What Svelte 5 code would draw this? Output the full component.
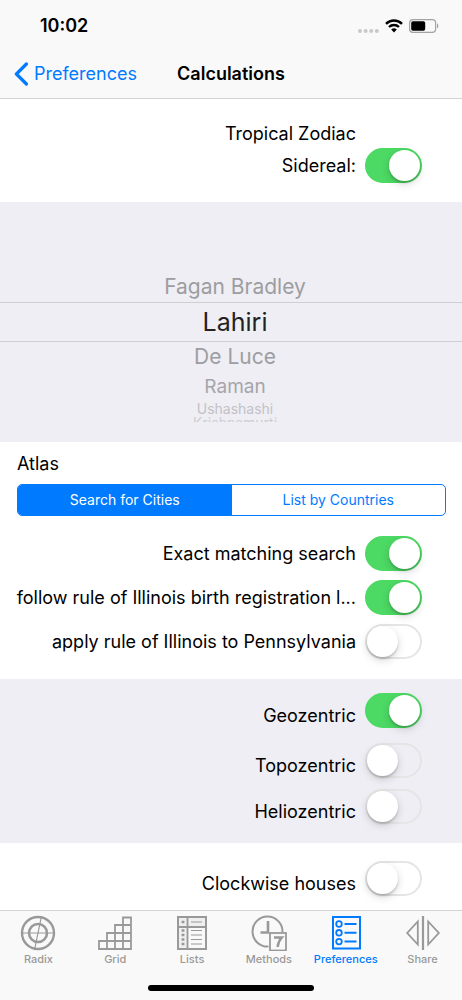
<script>
  let sidereal = $state(true);
  let exact = $state(true);
  let illinois = $state(true);
  let pennsylvania = $state(false);
  let geo = $state(true);
  let topo = $state(false);
  let helio = $state(false);
  let clockwise = $state(false);
  let atlas = $state('cities');
  let selected = $state('Lahiri');
  let tab = $state('Preferences');

  const systems = [
    { name: 'Fagan Bradley', kind: 'near' },
    { name: 'Lahiri', kind: 'middle' },
    { name: 'De Luce', kind: 'near' },
    { name: 'Raman', kind: 'far' },
    { name: 'Ushashashi', kind: 'farther' },
    { name: 'Krishnamurti', kind: 'edge' }
  ];
  const tabs = ['Radix', 'Grid', 'Lists', 'Methods', 'Preferences', 'Share'];
</script>

<div class="screen">
  <header>
    <div class="status">
      <span class="time">10:02</span>
      <svg class="signal" width="21" height="14" viewBox="0 0 21 14" fill="#c9c9cb" aria-hidden="true">
        <circle cx="2" cy="12" r="2" /><circle cx="7.6" cy="12" r="2" /><circle cx="13.2" cy="12" r="2" /><circle cx="18.8" cy="12" r="2" />
      </svg>
      <svg class="wifi" width="18" height="14" viewBox="0 0 18 14" aria-hidden="true">
        <path d="M1 4.8a11.6 11.6 0 0 1 16 0" fill="none" stroke="#000" stroke-width="2.5" />
        <path d="M4 8a7.2 7.2 0 0 1 10 0" fill="none" stroke="#000" stroke-width="2.4" />
        <path d="M6.2 10.5a4 4 0 0 1 5.6 0L9 13.4z" />
      </svg>
      <svg class="battery" width="30" height="14" viewBox="0 0 30 14" aria-hidden="true">
        <rect x="0.6" y="0.6" width="26" height="12.8" rx="3.4" fill="none" stroke="#a3a3a5" stroke-width="1.2" />
        <rect x="2.2" y="2.2" width="14" height="9.6" rx="1.8" />
        <path d="M28 4.6c1.8.6 1.8 4.2 0 4.8z" fill="#a3a3a5" />
      </svg>
    </div>
    <nav class="bar">
      <button class="back">
        <svg width="15" height="24" viewBox="0 0 15 24" fill="none" stroke="#007aff" stroke-width="3.2" stroke-linecap="round" stroke-linejoin="round" aria-hidden="true"><path d="M12.4 2 2.4 12l10 10" /></svg>
        Preferences
      </button>
      <h1>Calculations</h1>
    </nav>
  </header>

  <main>
    <section class="zodiac">
      <p>Tropical Zodiac</p>
      <div class="row">
        <label for="sidereal">Sidereal:</label>
        <input id="sidereal" type="checkbox" role="switch" bind:checked={sidereal} />
      </div>
    </section>

    <section class="wheel" role="listbox" aria-label="Ayanamsa">
      {#each systems as s}
        <button role="option" aria-selected={selected === s.name} class={s.kind} onclick={() => (selected = s.name)}>{s.name}</button>
      {/each}
    </section>

    <section class="atlas">
      <h2>Atlas</h2>
      <div class="segments">
        <button class:on={atlas === 'cities'} onclick={() => (atlas = 'cities')}>Search for Cities</button>
        <button class:on={atlas === 'countries'} onclick={() => (atlas = 'countries')}>List by Countries</button>
      </div>
      <div class="rows">
        <div class="row">
          <label for="exact">Exact matching search</label>
          <input id="exact" type="checkbox" role="switch" bind:checked={exact} />
        </div>
        <div class="row">
          <label for="illinois">follow rule of Illinois birth registration l...</label>
          <input id="illinois" type="checkbox" role="switch" bind:checked={illinois} />
        </div>
        <div class="row">
          <label for="penn">apply rule of Illinois to Pennsylvania</label>
          <input id="penn" type="checkbox" role="switch" bind:checked={pennsylvania} />
        </div>
      </div>
    </section>

    <section class="centre">
      <div class="row low">
        <label for="geo">Geozentric</label>
        <input id="geo" type="checkbox" role="switch" bind:checked={geo} />
      </div>
      <div class="others">
        <div class="row low">
          <label for="topo">Topozentric</label>
          <input id="topo" type="checkbox" role="switch" bind:checked={topo} />
        </div>
        <div class="row low">
          <label for="helio">Heliozentric</label>
          <input id="helio" type="checkbox" role="switch" bind:checked={helio} />
        </div>
      </div>
    </section>

    <section class="houses">
      <div class="row low">
        <label for="clock">Clockwise houses</label>
        <input id="clock" type="checkbox" role="switch" bind:checked={clockwise} />
      </div>
    </section>
  </main>

  <footer>
    <nav class="tabs">
      {#each tabs as t}
        <button class:active={tab === t} onclick={() => (tab = t)}>
          <svg width="36" height="36" viewBox="0 0 36 36" fill="none" stroke="currentColor" stroke-width="2" aria-hidden="true">
            {#if t === 'Radix'}
              <circle cx="18" cy="18" r="16" stroke-width="2.4" /><circle cx="18" cy="18" r="9" stroke-width="2.6" />
              <path d="M1 18h34M21.5 1l-7 34" stroke-width="1.2" />
            {:else if t === 'Grid'}
              <path d="M2 34V26h32v8zM10 34V18h24M18 34V10h16M26 34V2.5h8V34" stroke-width="1.8" />
            {:else if t === 'Lists'}
              <rect x="4" y="2" width="28" height="32" fill="#efefef" stroke-width="2" />
              <rect x="14" y="12.500" width="17" height="20.500" fill="#f9f9f9" stroke="none" />
              <path d="M4 12h28M13.5 2v32" stroke-width="1.8" />
              <path d="M17 7h11M17 15.5h11M17 20h11M17 24.5h11M17 29h11" stroke-width="1" />
              <path d="M7.6 7h2.8M7.6 15.5h2.8M7.6 20h2.8M7.6 24.5h2.8M7.6 29h2.8" stroke-width="2.4" />
            {:else if t === 'Methods'}
              <path d="M17.5 31.5A15 15 0 1 1 31.500 17" />
              <path d="M17 6v11.5H9.5" stroke-width="2.6" />
              <rect x="19" y="18" width="16" height="17.500" stroke-width="1.8" />
              <path d="M23 22.5h7.800c-2.8 3-3.8 5.5-4.2 9.500" stroke-width="2.5" />
            {:else if t === 'Preferences'}
              <rect x="5" y="2" width="27" height="31.5" />
              <circle cx="11" cy="9" r="2.8" stroke-width="1.8" /><circle cx="11" cy="17.8" r="2.8" stroke-width="1.8" /><circle cx="11" cy="26.6" r="2.8" stroke-width="1.8" />
              <path d="M16.5 9h12M16.5 17.8h12M16.5 26.6h12" />
            {:else}
              <path d="M18 1v34" stroke-width="2.2" />
              <path d="M12.8 6.5v23L2.2 18zM23.2 6.5v23L33.8 18z" stroke-width="1.8" />
            {/if}
          </svg>
          <span>{t}</span>
        </button>
      {/each}
    </nav>
    <div class="home"></div>
  </footer>
</div>

<style>
  :global(body) {
    margin: 0;
  }
  .screen {
    min-height: 100vh;
    display: flex;
    flex-direction: column;
    background: #fff;
    color: #000;
    font-family: Inter, 'Liberation Sans', sans-serif;
    font-size: 18px;
    line-height: 24px;
  }
  button {
    font: inherit;
    border: 0;
    padding: 0;
    background: none;
    color: inherit;
  }
  h1,
  h2,
  p {
    margin: 0;
    font-size: inherit;
    font-weight: 400;
  }
  header {
    background: #f9f9f9;
    border-bottom: 1px solid #d4d4d6;
  }
  .status {
    display: flex;
    align-items: center;
    padding: 14px 23px 12px 40px;
  }
  .time {
    flex: 1;
    font-weight: 600;
  }
  .wifi {
    margin: 0 6px;
  }
  .bar {
    display: grid;
    grid-template-columns: 1fr auto 1fr;
    align-items: center;
    padding: 12px 14px;
  }
  .back {
    display: flex;
    align-items: center;
    gap: 5px;
    color: #007aff;
  }
  h1 {
    font-weight: 600;
  }
  main {
    flex: 1;
  }
  .zodiac {
    padding: 23px 40px 19px 16px;
  }
  .zodiac p {
    text-align: right;
    padding-right: 66px;
    margin-bottom: 2px;
  }
  .row {
    display: flex;
    align-items: center;
    justify-content: flex-end;
    gap: 9px;
  }
  .row.low {
    align-items: flex-end;
  }
  .row label {
    white-space: nowrap;
  }
  input {
    appearance: none;
    flex: none;
    width: 57px;
    height: 35px;
    margin: 0;
    border-radius: 18px;
    border: 2px solid #e5e5e5;
  }
  input::before {
    content: '';
    display: block;
    width: 31px;
    height: 31px;
    border-radius: 50%;
    background: #fff;
    box-shadow: 0 3px 8px rgba(0, 0, 0, 0.16), 0 2px 2px rgba(0, 0, 0, 0.16);
  }
  input:checked {
    background: #4cd964;
    border-color: #4cd964;
  }
  input:checked::before {
    margin-left: 22px;
  }
  .wheel {
    display: flex;
    flex-direction: column;
    background: #efeef4;
    color: #9d9da1;
    padding: 70px 0 20px;
    text-align: center;
  }
  .wheel button {
    padding-left: 8px;
  }
  .wheel .near {
    font-size: 21px;
    line-height: 30px;
  }
  .wheel .middle {
    border-top: 1px solid #cfcfd3;
    border-bottom: 1px solid #cfcfd3;
    color: #222;
    font-size: 25px;
    line-height: 38px;
  }
  .wheel .far {
    color: #a5a5a9;
    font-size: 19px;
    line-height: 30px;
  }
  .wheel .farther {
    color: #c2c2c6;
    font-size: 14px;
    line-height: 14px;
  }
  .wheel .edge {
    color: #cdcdd1;
    font-size: 14px;
    line-height: 14px;
    height: 6px;
    overflow: hidden;
  }
  .atlas {
    padding: 10px 16px 20px 17px;
  }
  .segments {
    display: flex;
    margin-top: 8px;
    border: 1px solid #007aff;
    border-radius: 5px;
    overflow: hidden;
  }
  .segments button {
    flex: 1;
    font-size: 14px;
    line-height: 30px;
    color: #007aff;
  }
  .segments .on {
    background: #007aff;
    color: #fff;
  }
  .rows {
    display: flex;
    flex-direction: column;
    gap: 9px;
    padding: 20px 24px 0 0;
  }
  .centre {
    background: #efeef4;
    padding: 14px 40px 19px 16px;
  }
  .others {
    display: flex;
    flex-direction: column;
    gap: 11px;
    margin-top: 15px;
  }
  .houses {
    padding: 18px 40px 14px 16px;
  }
  footer {
    background: #f9f9f9;
    border-top: 1px solid #d4d4d6;
    padding-bottom: 9px;
  }
  .tabs {
    display: grid;
    grid-template-columns: repeat(6, 1fr);
    padding-right: 1px;
  }
  .tabs button {
    display: flex;
    flex-direction: column;
    align-items: center;
    padding-top: 4px;
    color: #999;
    font-size: 11px;
    font-weight: 500;
    line-height: 16px;
  }
  .tabs .active {
    color: #007aff;
  }
  .home {
    width: 36%;
    height: 6px;
    margin: 18px auto 0;
    border-radius: 3px;
    background: #000;
  }
</style>
